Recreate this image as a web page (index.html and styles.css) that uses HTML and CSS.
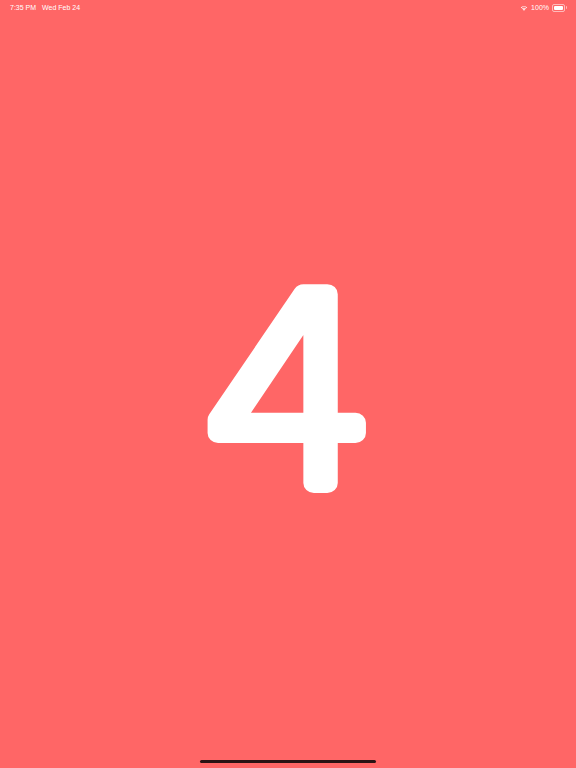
FILE: index.html
```html
<!DOCTYPE html>
<html lang="en">
<head>
<meta charset="utf-8">
<title>4</title>
<link rel="stylesheet" href="styles.css">
</head>
<body>
<div class="screen">
  <header class="status">
    <div class="status-left">
      <span class="time">7:35 PM</span>
      <span class="date">Wed Feb 24</span>
    </div>
    <div class="status-right">
      <svg class="wifi" width="8" height="6" viewBox="0 0 18 14">
        <path d="M9 13.5 L6.2 10.6 A4 4 0 0 1 11.8 10.6 Z" fill="#fff"/>
        <path d="M4.3 8.6 A6.6 6.6 0 0 1 13.7 8.6 L12.4 9.9 A4.8 4.8 0 0 0 5.6 9.9 Z" fill="#fff"/>
        <path d="M1.6 5.9 A10.4 10.4 0 0 1 16.4 5.9 L15 7.3 A8.4 8.4 0 0 0 3 7.3 Z" fill="#fff"/>
      </svg>
      <span class="pct">100%</span>
      <span class="battery"><span class="battery-fill"></span></span>
    </div>
  </header>
  <main class="stage">
    <svg class="digit" width="300" height="340" viewBox="0 0 300 340">
      <text class="digit-text" transform="translate(153 269) scale(1.046 1)">4</text>
    </svg>
  </main>
  <footer class="home">
    <span class="home-bar"></span>
  </footer>
</div>
</body>
</html>
```
FILE: styles.css
```css
html, body {
  margin: 0;
  padding: 0;
}
body {
  background: #ff6666;
  font-family: "Liberation Sans", Arial, sans-serif;
}
.screen {
  width: 576px;
  height: 768px;
  display: flex;
  flex-direction: column;
  background: #ff6666;
}
.status {
  height: 20px;
  display: flex;
  justify-content: space-between;
  align-items: flex-start;
  padding: 3px 9px 0 10px;
  box-sizing: border-box;
  color: #fff;
  font-size: 7px;
  line-height: 9px;
}
.status-left {
  display: flex;
  gap: 6px;
}
.status-right {
  display: flex;
  align-items: center;
  gap: 3px;
}
.wifi {
  display: block;
}
.battery {
  position: relative;
  width: 9px;
  height: 4px;
  border: 1px solid rgba(255,255,255,0.55);
  border-radius: 2px;
  padding: 1px;
  box-sizing: content-box;
  margin-right: 2px;
}
.battery::after {
  content: "";
  position: absolute;
  right: -3px;
  top: 1.5px;
  width: 1px;
  height: 3px;
  background: rgba(255,255,255,0.55);
  border-radius: 0 1px 1px 0;
}
.battery-fill {
  display: block;
  width: 100%;
  height: 100%;
  background: #fff;
  border-radius: 1px;
}
.stage {
  flex: 1;
  display: flex;
  align-items: center;
  justify-content: center;
}
.digit {
  display: block;
}
.digit-text {
  font-family: "DejaVu Sans", sans-serif;
  font-weight: 200;
  font-size: 259px;
  text-anchor: middle;
  fill: #fff;
  stroke: #fff;
  stroke-width: 20px;
  stroke-linejoin: round;
  stroke-linecap: round;
}
.home {
  height: 20px;
  display: flex;
  justify-content: center;
}
.home-bar {
  margin-top: 12px;
  width: 176px;
  height: 3px;
  border-radius: 2px;
  background: #2a1414;
}
```
